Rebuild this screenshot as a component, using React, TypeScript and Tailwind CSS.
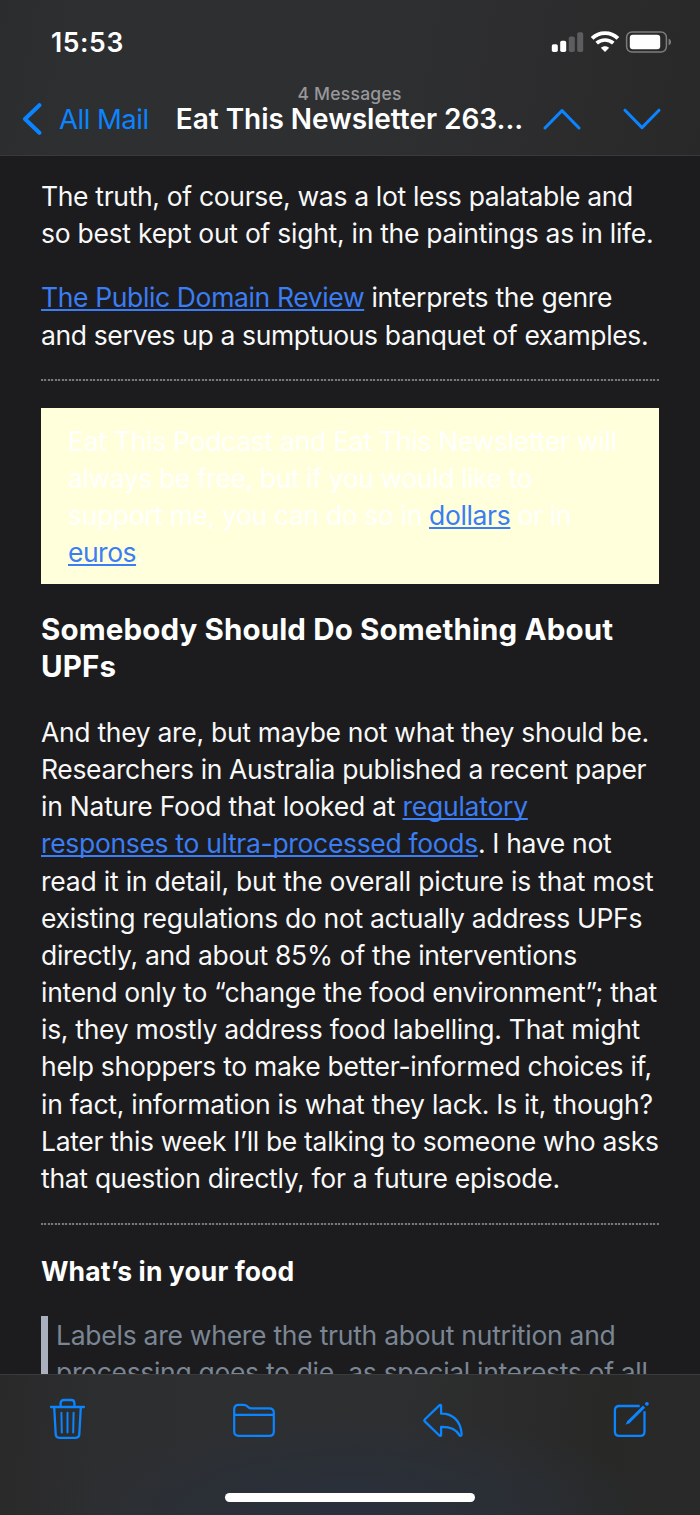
import type { ReactNode } from "react";

function Line({ className, children }: { className?: string; children: ReactNode }) {
  return <span className={`block h-[37.2px] whitespace-nowrap pt-[0.7px] ${className ?? ""}`}>{children}</span>;
}

function Link({ children }: { children: ReactNode }) {
  return (
    <a
      href="#"
      className="text-[#3b7df4] underline decoration-[1.5px] underline-offset-[2px] [text-decoration-skip-ink:none]"
    >
      {children}
    </a>
  );
}

function Divider() {
  return (
    <div className="h-[2px] bg-[repeating-linear-gradient(90deg,#77777a_0px,#77777a_1.7px,#29292b_1.7px,#29292b_3.5px)]" />
  );
}

function Header() {
  return (
    <header className="h-[156px] shrink-0 border-b border-[#39393b] bg-[linear-gradient(100deg,#2b2c2d_0%,#2e2f31_12%,#2e2f31_55%,#2b2b2c_85%,#282828_100%)]">
      <div className="flex h-[84px] items-center pl-[51px] pr-[29px]">
        <span className="text-[26.5px] leading-[30px] font-semibold tracking-[0.6px]">15:53</span>
        <svg className="ml-auto" width="120" height="24" viewBox="0 0 120 24" fill="none">
          <rect x="0.8" y="14.2" width="6" height="7.8" rx="1.8" fill="#fff" />
          <rect x="9.2" y="10.8" width="6" height="11.2" rx="1.8" fill="#fff" />
          <rect x="17.8" y="6.5" width="6" height="15.5" rx="1.8" fill="#5d5d5f" />
          <rect x="26.2" y="2.2" width="6" height="19.8" rx="1.8" fill="#5d5d5f" />
          <path d="M41.1 8.4C48.2 1.4 59.8 1.4 66.9 8.4" stroke="#fff" strokeWidth="3.9" />
          <path d="M45.7 13.2C50.3 8.9 57.7 8.9 62.3 13.2" stroke="#fff" strokeWidth="3.7" />
          <path d="M54 21.9L49.8 17.8C52.1 15.6 55.9 15.6 58.2 17.8Z" fill="#fff" />
          <rect x="75.6" y="2" width="39.8" height="20" rx="5.4" stroke="#7d7d7f" strokeWidth="1.5" />
          <rect x="78.8" y="4.8" width="30.4" height="14.4" rx="3" fill="#fff" />
          <path d="M117.6 8.8C119.4 9.4 120 10.6 120 12S119.4 14.6 117.6 15.2Z" fill="#7d7d7f" />
        </svg>
      </div>
      <div className="flex h-[69px] items-end pl-[22px] pr-[39px]">
        <a href="#" className="flex h-[69px] w-[154px] shrink-0 items-center text-[#0b84ff]">
          <svg width="20" height="34" viewBox="0 0 20 34" fill="none" className="shrink-0">
            <path d="M17.4 3.2L3 17L17.4 30.8" stroke="currentColor" strokeWidth="4" strokeLinecap="round" strokeLinejoin="round" />
          </svg>
          <span className="ml-[17px] whitespace-nowrap text-[27.5px] leading-[34px] tracking-[-0.5px]">All Mail</span>
        </a>
        <div className="flex h-[69px] w-[347px] shrink-0 flex-col items-center">
          <span className="text-[17.5px] leading-[20px] font-medium tracking-[0.25px] text-[#98989b]">4 Messages</span>
          <span className="-mt-[2px] whitespace-nowrap text-[28px] leading-[34px] font-semibold tracking-[-0.03px]">Eat This Newsletter 263...</span>
        </div>
        <div className="ml-auto flex h-[69px] items-center gap-[42px] text-[#0b84ff]">
          <svg width="38" height="22" viewBox="0 0 38 22" fill="none">
            <path d="M2 20L19 2.6L36 20" stroke="currentColor" strokeWidth="3" strokeLinecap="round" strokeLinejoin="round" />
          </svg>
          <svg width="38" height="22" viewBox="0 0 38 22" fill="none">
            <path d="M2 2.2L19 19.6L36 2.2" stroke="currentColor" strokeWidth="3" strokeLinecap="round" strokeLinejoin="round" />
          </svg>
        </div>
      </div>
    </header>
  );
}

function Toolbar() {
  return (
    <footer className="h-[141px] shrink-0 border-t border-[#3b3b3d] bg-[radial-gradient(ellipse_300px_105px_at_50%_100%,#29303c_0%,#2a2f37cc_55%,transparent_100%),linear-gradient(95deg,#29292a_0%,#2d2e2f_15%,#2e2f30_55%,#282827_85%,#282928_100%)]">
      <div className="flex h-[86px] items-center justify-between pl-[49px] pr-[50px] text-[#0b84ff]">
        <svg width="37" height="42" viewBox="0 0 37 42" fill="none" stroke="currentColor" strokeWidth="2.3" strokeLinecap="round" strokeLinejoin="round">
          <path d="M2 10H35" />
          <path d="M11.6 9.6V6.2C11.6 4.2 12.9 3 14.9 3H22.1C24.1 3 25.4 4.2 25.4 6.2V9.6" />
          <path d="M5.2 10.4L6.7 37.3C6.8 39.4 8.1 40.8 10.2 40.8H26.8C28.9 40.8 30.2 39.4 30.3 37.3L31.8 10.4" />
          <path d="M12.4 15.7L12.8 35.6M18.5 15.7V35.6M24.6 15.7L24.2 35.6" strokeWidth="2" />
        </svg>
        <svg width="42" height="42" viewBox="0 0 42 42" fill="none" stroke="currentColor" strokeWidth="2.2" strokeLinejoin="round">
          <path d="M1.2 12.3C1.2 9.4 2.8 7.8 5.6 7.8H10.7C12.2 7.8 13 8.2 14.2 9.2L15.5 10.4C16.4 11.2 17 11.4 18.3 11.4H36.4C39.2 11.4 40.8 12.9 40.8 15.8V34.4C40.8 37.3 39.2 38.8 36.4 38.8H5.6C2.8 38.8 1.2 37.3 1.2 34.4ZM1.2 17.9H40.8" />
        </svg>
        <svg width="42" height="42" viewBox="1.2 0 42 42" fill="none" stroke="currentColor" strokeWidth="2.3" strokeLinejoin="round">
          <path d="M19.3 8.8V16.7C30.5 16.4 38.8 23.5 39.8 37C39.9 39 38.4 39.4 37.4 37.8C33.6 31.4 28 29.7 19.3 29.9V38.1C19.3 38.9 18.3 39.2 17.6 38.5L3.2 24.7C2.3 23.8 2.3 23.1 3.2 22.2L17.6 8.3C18.3 7.6 19.3 7.9 19.3 8.8Z" />
        </svg>
        <svg width="38" height="42" viewBox="-0.5 0 38 42" fill="none" stroke="currentColor" strokeWidth="2.3" strokeLinecap="butt" strokeLinejoin="round">
          <path d="M27.2 9H6.8C3.9 9 2.4 10.5 2.4 13.4V34.4C2.4 37.3 3.9 38.8 6.8 38.8H27.6C30.5 38.8 32 37.3 32 34.4V14.3" />
          <path d="M31.6 9.6L15.4 25.6" strokeWidth="3" />
          <path d="M15.2 23.4L13 27.8L17.8 25.8Z" fill="currentColor" stroke="none" />
          <circle cx="34.4" cy="6.8" r="1.9" fill="currentColor" stroke="none" />
        </svg>
      </div>
      <div className="mx-auto mt-[32px] h-[9px] w-[250px] rounded-full bg-white" />
    </footer>
  );
}

export default function App() {
  return (
    <div className="flex h-[1515px] w-[700px] flex-col overflow-hidden bg-[#1c1c1e] font-[Inter,'Liberation_Sans',sans-serif] text-white">
      <Header />
      <main className="min-h-0 flex-1 overflow-hidden px-[41px] pt-[21.2px] text-[26.5px] leading-[37.2px] text-[#f8f8f8]">
        <p>
          <Line className="tracking-[-0.33px]">The truth, of course, was a lot less palatable and</Line>
          <Line className="tracking-[-0.27px]">so best kept out of sight, in the paintings as in life.</Line>
        </p>
        <p className="mt-[27.2px]">
          <Line className="tracking-[-0.31px]">
            <span className="tracking-[-0.37px]">
              <Link>The Public Domain Review</Link>
            </span>{" "}
            interprets the genre
          </Line>
          <Line className="tracking-[-0.37px]">and serves up a sumptuous banquet of examples.</Line>
        </p>
        <div className="mt-[26px] mb-[27px]">
          <Divider />
        </div>
        <div className="h-[176px] bg-[#ffffdb] pt-[14px] pl-[27px] text-white">
          <Line className="tracking-[-0.28px]">Eat This Podcast and Eat This Newsletter will</Line>
          <Line className="tracking-[-0.4px]">always be free, but if you would like to</Line>
          <Line className="tracking-[-0.36px]">
            support me, you can do so in <Link>dollars</Link> or in
          </Line>
          <Line className="tracking-[-0.5px]">
            <Link>euros</Link>.
          </Line>
        </div>
        <h2 className="mt-[25.7px] text-[29.5px] font-bold text-white">
          <Line className="tracking-[0.14px]">Somebody Should Do Something About</Line>
          <Line className="tracking-[0.14px]">UPFs</Line>
        </h2>
        <p className="mt-[28.9px]">
          <Line className="tracking-[-0.3px]">And they are, but maybe not what they should be.</Line>
          <Line className="tracking-[-0.355px]">Researchers in Australia published a recent paper</Line>
          <Line className="tracking-[-0.245px]">
            in Nature Food that looked at <Link>regulatory</Link>
          </Line>
          <Line className="tracking-[-0.325px]">
            <Link>responses to ultra-processed foods</Link>. I have not
          </Line>
          <Line className="tracking-[-0.215px]">read it in detail, but the overall picture is that most</Line>
          <Line className="tracking-[-0.31px]">existing regulations do not actually address UPFs</Line>
          <Line className="tracking-[-0.29px]">directly, and about 85% of the interventions</Line>
          <Line className="tracking-[-0.28px]">intend only to “change the food environment”; that</Line>
          <Line className="tracking-[-0.285px]">is, they mostly address food labelling. That might</Line>
          <Line className="tracking-[-0.28px]">help shoppers to make better-informed choices if,</Line>
          <Line className="tracking-[-0.27px]">in fact, information is what they lack. Is it, though?</Line>
          <Line className="tracking-[-0.325px]">Later this week I’ll be talking to someone who asks</Line>
          <Line className="tracking-[-0.29px]">that question directly, for a future episode.</Line>
        </p>
        <div className="mt-[26.3px] mb-[27.5px]">
          <Divider />
        </div>
        <h3 className="text-[26.5px] font-bold text-white">
          <Line className="tracking-[0.1px]">What’s in your food</Line>
        </h3>
        <blockquote className="mt-[26.5px] border-l-[7px] border-[#abb0be] pl-[8px] text-[#7b8694]">
          <Line className="tracking-[-0.265px]">Labels are where the truth about nutrition and</Line>
          <Line className="tracking-[-0.32px]">processing goes to die, as special interests of all</Line>
        </blockquote>
      </main>
      <Toolbar />
    </div>
  );
}
